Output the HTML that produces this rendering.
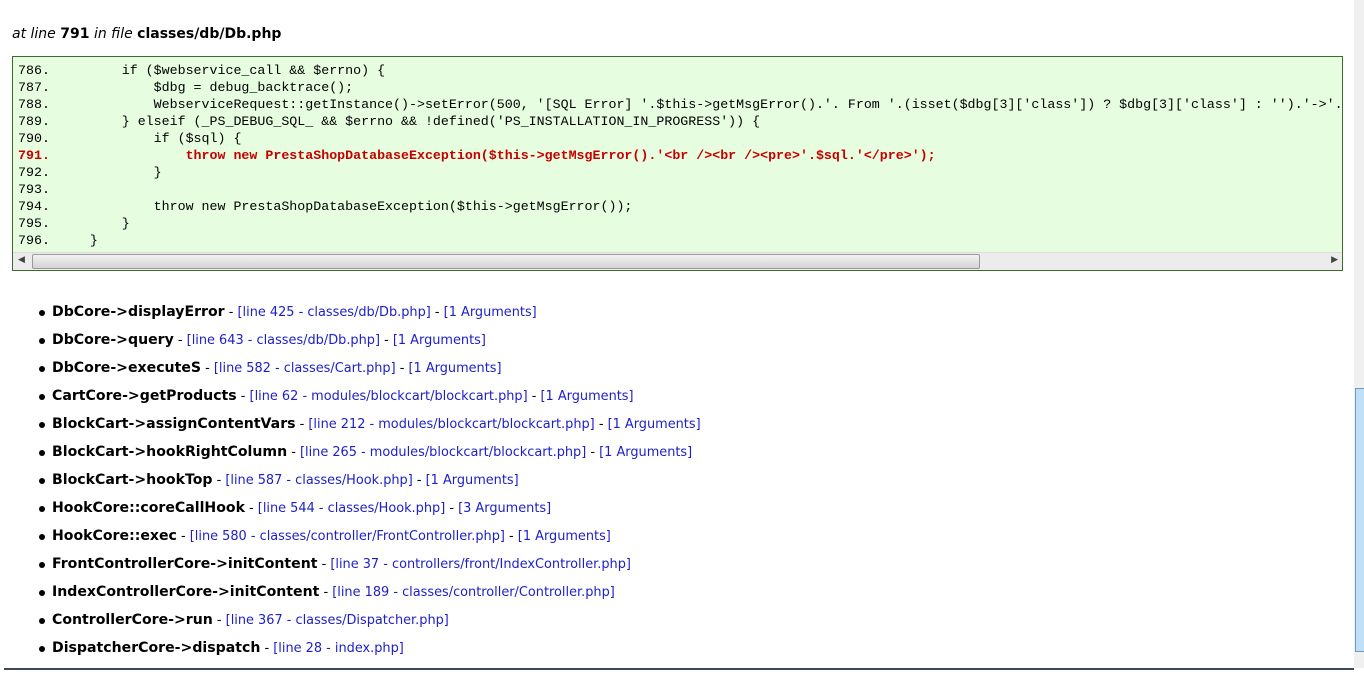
<!DOCTYPE html>
<html><head><meta charset="utf-8"><style>
body{margin:0;width:1364px;height:677px;overflow:hidden;background:#fff;position:relative;font-family:"DejaVu Sans","Liberation Sans",sans-serif;}
.h{position:absolute;left:12px;top:26px;font-size:14px;color:#000;}
.box{position:absolute;left:12px;top:56px;width:1329px;height:213px;border:1px solid #3d6b2e;background:#e6fde0;overflow:hidden;}
pre{margin:0;position:absolute;left:5px;top:5px;font-family:"Liberation Mono",monospace;font-size:13.3px;line-height:17px;color:#000;white-space:pre;}
.r{color:#c40000;font-weight:bold;}
.sb{position:absolute;left:0;bottom:0;width:1329px;height:17px;background:#ececec;border-top:1px solid #dcdcdc;}
.th{position:absolute;left:19px;top:1px;width:946px;height:13px;border:1px solid #9a9a9a;border-radius:2px;background:linear-gradient(#f2f2f2,#d4d4d4);}
ul{position:absolute;left:0;top:304px;margin:0;padding:0 0 0 52px;list-style:none;}
li{height:28px;font-size:12.9px;color:#000;position:relative;white-space:nowrap;}
li:before{content:"";position:absolute;left:-13px;top:6px;width:6px;height:6px;border-radius:50%;background:#000;}
li b{font-size:14.1px;}
a{color:#1d1ec8;text-decoration:none;}
.vs{position:absolute;left:1354px;top:0;width:10px;height:668px;background:#f0f0f0;}
.vt{position:absolute;left:1355px;top:388px;width:9px;height:262px;background:#bfe0f6;border:1px solid #6e9cc0;border-right:none;}
.bl{position:absolute;left:4px;top:668px;width:1350px;height:2px;background:#3b4a5a;}
</style></head><body>
<div class="h"><i>at line</i> <b>791</b> <i>in file</i> <b>classes/db/Db.php</b></div>
<div class="box"><pre>786.         if ($webservice_call &amp;&amp; $errno) {
787.             $dbg = debug_backtrace();
788.             WebserviceRequest::getInstance()-&gt;setError(500, '[SQL Error] '.$this-&gt;getMsgError().'. From '.(isset($dbg[3]['class']) ? $dbg[3]['class'] : '').'-&gt;'.$dbg[3]['function']
789.         } elseif (_PS_DEBUG_SQL_ &amp;&amp; $errno &amp;&amp; !defined('PS_INSTALLATION_IN_PROGRESS')) {
790.             if ($sql) {
<span class="r">791.                 throw new PrestaShopDatabaseException($this-&gt;getMsgError().'&lt;br /&gt;&lt;br /&gt;&lt;pre&gt;'.$sql.'&lt;/pre&gt;');</span>
792.             }
793.
794.             throw new PrestaShopDatabaseException($this-&gt;getMsgError());
795.         }
796.     }</pre>
<div class="sb"><div class="th"></div><span style="position:absolute;left:5px;top:2px;font-size:9px;color:#444">◀</span><span style="position:absolute;right:4px;top:2px;font-size:9px;color:#444">▶</span></div></div>
<ul>
<li><b>DbCore-&gt;displayError</b> - <a>[line 425 - classes/db/Db.php]</a> - <a>[1 Arguments]</a></li>
<li><b>DbCore-&gt;query</b> - <a>[line 643 - classes/db/Db.php]</a> - <a>[1 Arguments]</a></li>
<li><b>DbCore-&gt;executeS</b> - <a>[line 582 - classes/Cart.php]</a> - <a>[1 Arguments]</a></li>
<li><b>CartCore-&gt;getProducts</b> - <a>[line 62 - modules/blockcart/blockcart.php]</a> - <a>[1 Arguments]</a></li>
<li><b>BlockCart-&gt;assignContentVars</b> - <a>[line 212 - modules/blockcart/blockcart.php]</a> - <a>[1 Arguments]</a></li>
<li><b>BlockCart-&gt;hookRightColumn</b> - <a>[line 265 - modules/blockcart/blockcart.php]</a> - <a>[1 Arguments]</a></li>
<li><b>BlockCart-&gt;hookTop</b> - <a>[line 587 - classes/Hook.php]</a> - <a>[1 Arguments]</a></li>
<li><b>HookCore::coreCallHook</b> - <a>[line 544 - classes/Hook.php]</a> - <a>[3 Arguments]</a></li>
<li><b>HookCore::exec</b> - <a>[line 580 - classes/controller/FrontController.php]</a> - <a>[1 Arguments]</a></li>
<li><b>FrontControllerCore-&gt;initContent</b> - <a>[line 37 - controllers/front/IndexController.php]</a></li>
<li><b>IndexControllerCore-&gt;initContent</b> - <a>[line 189 - classes/controller/Controller.php]</a></li>
<li><b>ControllerCore-&gt;run</b> - <a>[line 367 - classes/Dispatcher.php]</a></li>
<li><b>DispatcherCore-&gt;dispatch</b> - <a>[line 28 - index.php]</a></li>
</ul>
<div class="vs"></div><div class="vt"></div><div class="bl"></div>
</body></html>
